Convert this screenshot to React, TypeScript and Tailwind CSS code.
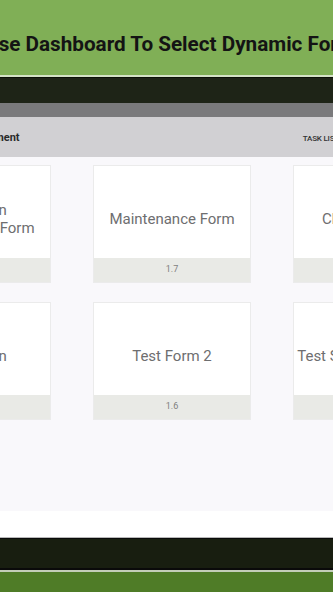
import React from "react";

type Card = { lines: string[]; version: string };

const row1: Card[] = [
  { lines: ["Inspection", "Maintenance Form"], version: "1.8" },
  { lines: ["Maintenance Form"], version: "1.7" },
  { lines: ["Checklist Form"], version: "1.5" },
];
const row2: Card[] = [
  { lines: ["Inspection"], version: "1.4" },
  { lines: ["Test Form 2"], version: "1.6" },
  { lines: ["Test Submission Form"], version: "1.2" },
];

function FormCard({ card }: { card: Card }) {
  return (
    <div className="w-[158px] shrink-0 flex flex-col border border-[#ebebeb] bg-white">
      <div className="h-[92px] pt-[13px] flex flex-col items-center justify-center text-[15px] leading-[18px] text-[#6e6e70] text-center whitespace-nowrap">
        {card.lines.map((l, i) => (
          <span key={i}>{l}</span>
        ))}
      </div>
      <div className="h-[24px] bg-[#e9eae6] flex items-center justify-center text-[9px] text-[#808080]">
        {card.version}
      </div>
    </div>
  );
}

export default function App() {
  return (
    <div
      className="w-[333px] h-[592px] overflow-hidden flex flex-col bg-[#4f7c27]"
      style={{ fontFamily: "Roboto, 'Noto Sans', sans-serif" }}
    >
      <div className="h-[75px] shrink-0 bg-[#80af56] overflow-hidden pt-[32px]">
        <div className="ml-[-15px] whitespace-nowrap text-[20.7px] leading-[24px] font-bold text-[#141414]">
          Use Dashboard To Select Dynamic Forms
        </div>
      </div>
      <div className="h-[2px] shrink-0 bg-[#d4e2c6]" />
      <div className="h-[1px] shrink-0 bg-[#0c0f08]" />
      <div className="h-[25px] shrink-0 bg-[#1e2417]" />
      <div className="h-[14px] shrink-0 bg-[#7a7a7c]" />
      <div className="h-[40px] shrink-0 bg-[#d1d0d3] pt-[3px] flex items-center justify-between overflow-hidden">
        <span className="ml-[-74px] text-[11px] font-bold text-[#2a2a2a] whitespace-nowrap">
          Form Management
        </span>
        <span className="mr-[-6px] text-[8px] font-medium text-[#333] whitespace-nowrap tracking-tight">
          TASK LIST
        </span>
      </div>
      <div className="h-[354px] shrink-0 bg-[#f9f8fb] pt-[8px] overflow-hidden flex flex-col gap-[19px]">
        <div className="flex gap-[42px] ml-[-107px]">
          {row1.map((c, i) => (
            <FormCard key={i} card={c} />
          ))}
        </div>
        <div className="flex gap-[42px] ml-[-107px]">
          {row2.map((c, i) => (
            <FormCard key={i} card={c} />
          ))}
        </div>
      </div>
      <div className="h-[26px] shrink-0 bg-white" />
      <div className="h-[1px] shrink-0 bg-[#b8b8b8]" />
      <div className="h-[1px] shrink-0 bg-[#0a0a0a]" />
      <div className="h-[29px] shrink-0 bg-[#181e10]" />
      <div className="h-[2px] shrink-0 bg-[#0a0a0a]" />
      <div className="h-[2px] shrink-0 bg-[#c3cdb8]" />
      <div className="flex-1 bg-[#4f7c27]" />
    </div>
  );
}
